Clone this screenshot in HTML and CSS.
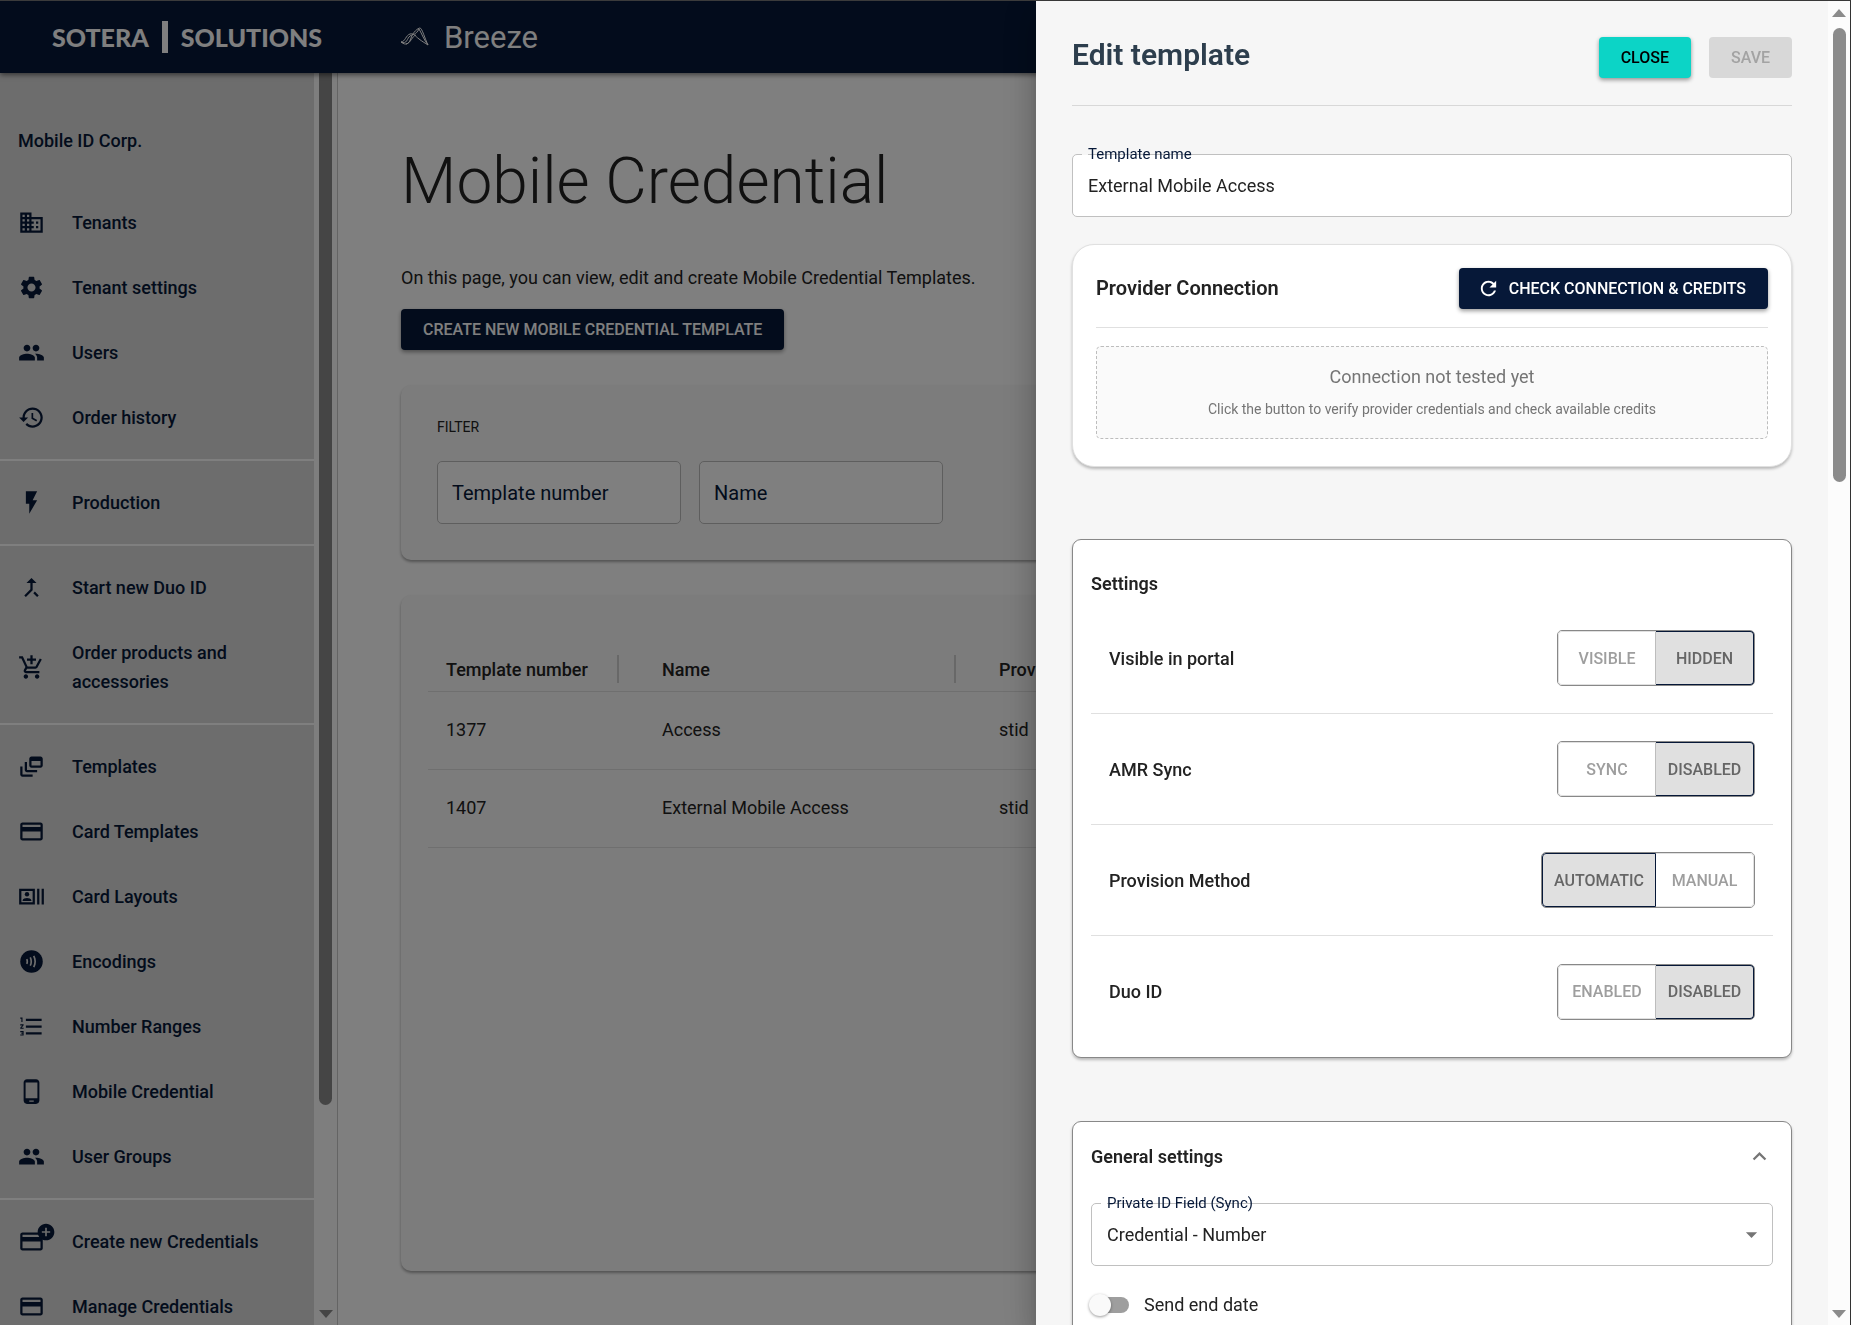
FILE: index.html
```html
<!DOCTYPE html>
<html lang="en">
<head>
    <meta charset="UTF-8">
    <meta name="viewport" content="width=device-width, initial-scale=1.0">
    <title>Breeze - Mobile Credential</title>
    <link rel="stylesheet" href="styles.css">
</head>
<body>
    <!-- Shared icons -->
    <svg class="sprite" aria-hidden="true">
        <symbol id="icon-people" viewBox="0 0 24 24"><path d="M16 11c1.660 0 2.990-1.340 2.990-3S17.660 5 16 5s-3 1.340-3 3 1.340 3 3 3zm-8 0c1.660 0 2.990-1.340 2.990-3S9.660 5 8 5 5 6.340 5 8s1.340 3 3 3zm0 2c-2.330 0-7 1.170-7 3.500V19h14v-2.500c0-2.330-4.670-3.500-7-3.500zm8 0c-.29 0-.62.02-.97.05 1.160.84 1.970 1.970 1.970 3.450V19h6v-2.500c0-2.330-4.670-3.500-7-3.500z"/></symbol>
        <symbol id="icon-card" viewBox="0 0 24 24"><path d="M20 4H4c-1.110 0-1.990.89-1.990 2L2 18c0 1.110.89 2 2 2h16c1.110 0 2-.89 2-2V6c0-1.110-.89-2-2-2zm0 14H4v-6h16v6zm0-10H4V6h16v2z"/></symbol>
    </svg>

    <header class="topbar">
        <div class="brand">SOTERA <span class="brand-bar"></span> SOLUTIONS</div>
        <div class="product">
            <svg class="product-icon" viewBox="0 0 28 20"><path d="M0 15C4 15 5 8 9 7c4-1 5 2 9 5s6 4 9 6M0 15c5 4 8 2 10-4S17 1 19 1s5 11 8 17M0 15c6 3 6-4 9-6s6-1 9-7c3 5 5 11 9 16M5 17c5-1 6-8 10-9"/></svg>
            <span>Breeze</span>
        </div>
    </header>

    <div class="layout">
        <aside class="sidebar">
            <nav class="menu">
                <p class="tenant">Mobile ID Corp.</p>
                <div class="menu-group">
                    <a class="menu-item" href="#"><svg class="icon" viewBox="0 0 24 24"><path d="M12 7V3H2v18h20V7H12zM6 19H4v-2h2v2zm0-4H4v-2h2v2zm0-4H4V9h2v2zm0-4H4V5h2v2zm4 12H8v-2h2v2zm0-4H8v-2h2v2zm0-4H8V9h2v2zm0-4H8V5h2v2zm10 12h-8v-2h2v-2h-2v-2h2v-2h-2V9h8v10zm-2-8h-2v2h2v-2zm0 4h-2v2h2v-2z"/></svg><span>Tenants</span></a>
                    <a class="menu-item" href="#"><svg class="icon" viewBox="0 0 24 24"><path d="M19.140 12.940c.04-.3.06-.61.06-.94 0-.32-.02-.64-.07-.94l2.030-1.580c.18-.14.23-.41.12-.61l-1.920-3.320c-.12-.22-.37-.29-.59-.22l-2.390.96c-.5-.38-1.030-.7-1.620-.94l-.36-2.540c-.04-.24-.24-.41-.48-.41h-3.840c-.24 0-.43.17-.47.41l-.36 2.540c-.59.24-1.130.57-1.620.94l-2.390-.96c-.22-.08-.47 0-.59.22L2.740 8.870c-.12.21-.08.47.12.61l2.030 1.580c-.05.3-.09.63-.09.94s.02.64.07.94l-2.030 1.580c-.18.14-.23.41-.12.61l1.920 3.320c.12.22.37.29.59.22l2.390-.96c.5.38 1.030.7 1.620.94l.36 2.540c.05.24.24.41.48.41h3.840c.24 0 .44-.17.47-.41l.36-2.540c.59-.24 1.130-.56 1.620-.94l2.390.96c.22.08.47 0 .59-.22l1.920-3.320c.12-.22.07-.47-.12-.61l-2.010-1.580zM12 15.600c-1.980 0-3.600-1.620-3.600-3.600s1.620-3.600 3.600-3.600 3.600 1.620 3.600 3.600-1.620 3.600-3.600 3.600z"/></svg><span>Tenant settings</span></a>
                    <a class="menu-item" href="#"><svg class="icon"><use href="#icon-people"/></svg><span>Users</span></a>
                    <a class="menu-item" href="#"><svg class="icon" viewBox="0 0 24 24"><path d="M13 3c-4.970 0-9 4.030-9 9H1l3.890 3.890.07.14L9 12H6c0-3.870 3.130-7 7-7s7 3.130 7 7-3.130 7-7 7c-1.930 0-3.680-.79-4.940-2.060l-1.420 1.420C8.270 19.990 10.510 21 13 21c4.970 0 9-4.030 9-9s-4.030-9-9-9zm-1 5v5l4.280 2.540.72-1.210-3.500-2.080V8H12z"/></svg><span>Order history</span></a>
                </div>
                <div class="menu-group">
                    <a class="menu-item" href="#"><svg class="icon" viewBox="0 0 24 24"><path d="M7 2v11h3v9l7-12h-4l4-8z"/></svg><span>Production</span></a>
                </div>
                <div class="menu-group">
                    <a class="menu-item" href="#"><svg class="icon" viewBox="0 0 24 24"><path d="M17 20.410 18.410 19 15 15.590 13.590 17 17 20.410zM7.500 8H11v5.590L5.590 19 7 20.410l6-6V8h3.500L12 3.500 7.500 8z"/></svg><span>Start new Duo ID</span></a>
                    <a class="menu-item" href="#"><svg class="icon" viewBox="0 0 24 24"><path d="M11 9h2V6h3V4h-3V1h-2v3H8v2h3v3zm-4 9c-1.100 0-1.990.9-1.990 2S5.900 22 7 22s2-.9 2-2-.9-2-2-2zm10 0c-1.100 0-1.990.9-1.990 2s.89 2 1.990 2 2-.9 2-2-.9-2-2-2zm-8.900-5h7.450c.75 0 1.410-.41 1.750-1.030L21.160 4.960 19.420 4l-3.870 7H8.530L4.270 2H1v2h2l3.600 7.590-1.350 2.440C4.520 15.370 5.480 17 7 17h12v-2H7l1.100-2z"/></svg><span>Order products and accessories</span></a>
                </div>
                <div class="menu-group">
                    <a class="menu-item" href="#"><svg class="icon" viewBox="0 0 24 24"><path d="M8 8H6v7c0 1.100.9 2 2 2h9v-2H8V8z"/><path d="M20 3h-8c-1.100 0-2 .9-2 2v6c0 1.100.9 2 2 2h8c1.100 0 2-.9 2-2V5c0-1.100-.9-2-2-2zm0 8h-8V7h8v4z"/><path d="M4 12H2v7c0 1.100.9 2 2 2h9v-2H4v-7z"/></svg><span>Templates</span></a>
                    <a class="menu-item" href="#"><svg class="icon"><use href="#icon-card"/></svg><span>Card Templates</span></a>
                    <a class="menu-item" href="#"><svg class="icon" viewBox="0 0 24 24"><path d="M21 5v14h2V5h-2zm-4 14h2V5h-2v14zM15 5H1v14h14V5zm-2 12H3V7h10v10z"/><circle cx="8" cy="9.940" r="1.950"/><path d="M11.890 15.350c0-1.300-2.590-1.950-3.890-1.950s-3.890.65-3.890 1.950V16h7.780v-.65z"/></svg><span>Card Layouts</span></a>
                    <a class="menu-item" href="#"><svg class="icon" viewBox="0 0 24 24"><circle cx="12" cy="12" r="10"/><path class="icon-cut" d="M8.460 14.450 7.100 13.830c.28-.61.41-1.240.4-1.860-.01-.63-.14-1.240-.4-1.800l1.360-.63c.35.75.53 1.560.54 2.400.01.86-.17 1.700-.54 2.510zm3.070 1.560-1.300-.74c.52-.92.78-1.980.78-3.150 0-1.190-.27-2.330-.8-3.400l1.340-.67c.64 1.280.96 2.650.96 4.070 0 1.430-.33 2.740-.98 3.890zm3.140 1.320-1.350-.66c.78-1.600 1.180-3.180 1.180-4.690 0-1.510-.4-3.070-1.180-4.640l1.340-.67C15.560 8.450 16 10.230 16 11.980c0 1.720-.44 3.510-1.330 5.350z"/></svg><span>Encodings</span></a>
                    <a class="menu-item" href="#"><svg class="icon" viewBox="0 0 24 24"><path d="M2 17h2v.5H3v1h1v.5H2v1h3v-4H2v1zm1-9h1V4H2v1h1v3zm-1 3h1.800L2 13.100v.9h3v-1H3.200L5 10.900V10H2v1zm5-6v2h14V5H7zm0 14h14v-2H7v2zm0-6h14v-2H7v2z"/></svg><span>Number Ranges</span></a>
                    <a class="menu-item" href="#"><svg class="icon" viewBox="0 0 24 24"><path d="M16 1H8C6.340 1 5 2.340 5 4v16c0 1.660 1.340 3 3 3h8c1.660 0 3-1.340 3-3V4c0-1.660-1.340-3-3-3zm-2 20h-4v-1h4v1zm3.250-3H6.750V4h10.500v14z"/></svg><span>Mobile Credential</span></a>
                    <a class="menu-item" href="#"><svg class="icon"><use href="#icon-people"/></svg><span>User Groups</span></a>
                </div>
                <div class="menu-group">
                    <a class="menu-item" href="#">
                        <span class="icon-wrap">
                            <svg class="icon"><use href="#icon-card"/></svg>
                            <svg class="icon-badge" viewBox="0 0 24 24"><path d="M12 2C6.480 2 2 6.480 2 12s4.480 10 10 10 10-4.480 10-10S17.520 2 12 2zm5 11h-4v4h-2v-4H7v-2h4V7h2v4h4v2z"/></svg>
                        </span>
                        <span>Create new Credentials</span>
                    </a>
                    <a class="menu-item" href="#"><svg class="icon"><use href="#icon-card"/></svg><span>Manage Credentials</span></a>
                </div>
            </nav>
            <div class="scrollbar sidebar-scrollbar">
                <div class="scroll-thumb"></div>
                <div class="scroll-arrow-down"></div>
            </div>
        </aside>

        <main class="content">
            <h1>Mobile Credential</h1>
            <p class="intro">On this page, you can view, edit and create Mobile Credential Templates.</p>
            <button class="btn btn-primary">Create new Mobile Credential Template</button>

            <section class="panel filter">
                <h2>Filter</h2>
                <div class="filter-fields">
                    <input type="text" placeholder="Template number" aria-label="Template number">
                    <input type="text" placeholder="Name" aria-label="Name">
                </div>
            </section>

            <section class="panel templates">
                <table>
                    <thead>
                        <tr>
                            <th class="col-number"><span>Template number</span></th>
                            <th class="col-name"><span>Name</span></th>
                            <th><span>Provider</span></th>
                        </tr>
                    </thead>
                    <tbody>
                        <tr><td>1377</td><td>Access</td><td>stid</td></tr>
                        <tr><td>1407</td><td>External Mobile Access</td><td>stid</td></tr>
                    </tbody>
                </table>
            </section>
        </main>
    </div>

    <div class="backdrop"></div>

    <div class="drawer" role="dialog" aria-labelledby="drawer-title">
        <div class="drawer-body">
            <div class="drawer-header">
                <h2 id="drawer-title">Edit template</h2>
                <div class="drawer-actions">
                    <button class="btn btn-accent">Close</button>
                    <button class="btn" disabled>Save</button>
                </div>
            </div>

            <div class="field">
                <label for="template-name">Template name</label>
                <input id="template-name" type="text" value="External Mobile Access">
            </div>

            <section class="card provider">
                <div class="provider-header">
                    <h3>Provider Connection</h3>
                    <button class="btn btn-primary">
                        <svg class="btn-icon" viewBox="0 0 24 24"><path d="M17.650 6.350C16.200 4.900 14.210 4 12 4c-4.420 0-7.990 3.580-7.990 8s3.570 8 7.990 8c3.730 0 6.840-2.550 7.730-6h-2.080c-.82 2.330-3.040 4-5.650 4-3.310 0-6-2.690-6-6s2.690-6 6-6c1.660 0 3.140.69 4.220 1.780L13 11h7V4l-2.350 2.350z"/></svg>
                        Check connection &amp; credits
                    </button>
                </div>
                <div class="connection-status">
                    <p>Connection not tested yet</p>
                    <small>Click the button to verify provider credentials and check available credits</small>
                </div>
            </section>

            <section class="card settings">
                <h3>Settings</h3>
                <div class="setting">
                    <span>Visible in portal</span>
                    <div class="toggle"><button>Visible</button><button class="selected" aria-pressed="true">Hidden</button></div>
                </div>
                <div class="setting">
                    <span>AMR Sync</span>
                    <div class="toggle"><button>Sync</button><button class="selected" aria-pressed="true">Disabled</button></div>
                </div>
                <div class="setting">
                    <span>Provision Method</span>
                    <div class="toggle"><button class="selected" aria-pressed="true">Automatic</button><button>Manual</button></div>
                </div>
                <div class="setting">
                    <span>Duo ID</span>
                    <div class="toggle"><button>Enabled</button><button class="selected" aria-pressed="true">Disabled</button></div>
                </div>
            </section>

            <section class="card general">
                <button class="general-header">
                    <span>General settings</span>
                    <svg class="icon" viewBox="0 0 24 24"><path d="M12 8l-6 6 1.410 1.410L12 10.830l4.590 4.580L18 14z"/></svg>
                </button>
                <div class="field">
                    <label for="private-id">Private ID Field (Sync)</label>
                    <select id="private-id"><option>Credential - Number</option></select>
                    <svg class="icon select-arrow" viewBox="0 0 24 24"><path d="M7 10l5 5 5-5z"/></svg>
                </div>
                <label class="switch"><input type="checkbox" role="switch">Send end date</label>
            </section>
        </div>
        <div class="scrollbar drawer-scrollbar">
            <div class="scroll-arrow-up"></div>
            <div class="scroll-thumb"></div>
            <div class="scroll-arrow-down"></div>
        </div>
    </div>
</body>
</html>
```
FILE: styles.css
```css
* {
    box-sizing: border-box;
}

body {
    margin: 0;
    height: 100vh;
    overflow: hidden;
    display: flex;
    flex-direction: column;
    border-top: 1px solid #777;
    background-color: #fff;
    font-family: Roboto, "Liberation Sans", sans-serif;
    font-size: 18px;
    line-height: 29px;
    color: #222;
}

h1, h2, h3, p {
    margin: 0;
}

button, input, select {
    font: inherit;
    color: inherit;
}

button {
    cursor: pointer;
}

.sprite {
    display: none;
}

.icon {
    width: 27px;
    height: 27px;
    flex-shrink: 0;
    fill: currentColor;
}

/* Top bar */
.topbar {
    position: relative;
    display: flex;
    align-items: center;
    flex-shrink: 0;
    height: 72px;
    padding-left: 52px;
    background-color: #061838;
    color: #fff;
    box-shadow: 0 2px 5px rgba(0, 0, 0, 0.5);
}

.brand {
    display: flex;
    align-items: center;
    gap: 13px;
    width: 349px;
    font-family: Lato, sans-serif;
    font-size: 25px;
    font-weight: 900;
}

.brand-bar {
    width: 6px;
    height: 32px;
    background-color: #fff;
}

.product {
    display: flex;
    align-items: center;
    gap: 15px;
    font-size: 31px;
}

.product-icon {
    width: 28px;
    height: 20px;
    fill: none;
    stroke: #fff;
    stroke-width: 1;
}

.layout {
    display: flex;
    flex: 1;
    min-height: 0;
}

/* Sidebar */
.sidebar {
    display: flex;
    flex-shrink: 0;
    width: 338px;
    border-right: 1px solid #c8c8c8;
    overflow: hidden;
}

.menu {
    flex: 1;
    background-color: #dadada;
    color: #061838;
    font-weight: 500;
}

.tenant {
    padding: 53px 18px 26px;
}

.menu-group {
    padding: 9px 0;
    border-bottom: 2px solid #fff;
}

.menu-item {
    display: flex;
    align-items: center;
    gap: 27px;
    padding: 18px;
    color: inherit;
    text-decoration: none;
}

.icon-cut {
    fill: #dadada;
}

.icon-wrap {
    position: relative;
    display: flex;
}

.icon-badge {
    position: absolute;
    top: -6px;
    right: -11px;
    width: 20px;
    height: 20px;
    fill: currentColor;
}

/* Scrollbars */
.scrollbar {
    display: flex;
    flex-direction: column;
    align-items: center;
    flex-shrink: 0;
    background-color: #fcfcfc;
}

.sidebar-scrollbar {
    width: 23px;
    justify-content: space-between;
    padding-bottom: 7px;
}

.scroll-thumb {
    width: 13px;
    border-radius: 7px;
    background-color: #8b8b8b;
}

.sidebar-scrollbar .scroll-thumb {
    height: 1032px;
    border-radius: 0 0 7px 7px;
}

.scroll-arrow-up,
.scroll-arrow-down {
    border: 7px solid transparent;
    border-width: 0 7px;
}

.scroll-arrow-up {
    border-bottom: 8px solid #8b8b8b;
}

.scroll-arrow-down {
    border-top: 8px solid #8b8b8b;
}

/* Main content */
.content {
    flex: 1;
    padding: 73px 63px 54px;
    display: flex;
    flex-direction: column;
    align-items: flex-start;
}

h1 {
    font-size: 64px;
    font-weight: 300;
    line-height: 72px;
}

.intro {
    margin: 45px 0 17px;
}

.btn {
    display: flex;
    align-items: center;
    gap: 9px;
    height: 41px;
    padding: 0 22px;
    border: none;
    border-radius: 4px;
    font-size: 16px;
    font-weight: 500;
    text-transform: uppercase;
}

.btn-primary {
    background-color: #061838;
    color: #fff;
    box-shadow: 0 2px 4px rgba(0, 0, 0, 0.4);
}

.btn-accent {
    background-color: #0cd4c6;
    color: #000;
    box-shadow: 0 2px 4px rgba(0, 0, 0, 0.4);
}

.btn:disabled {
    background-color: #d8d8d8;
    color: #a3a3a3;
}

.btn-icon {
    width: 23px;
    height: 23px;
    margin-left: -4px;
    fill: currentColor;
}

.panel {
    width: 100%;
    margin-top: 35px;
    border-radius: 10px;
    background-color: #f8f8f8;
    box-shadow: 0 2px 3px rgba(0, 0, 0, 0.35);
}

.filter {
    padding: 28px 36px 36px;
}

.filter h2 {
    font-size: 14px;
    font-weight: 400;
    line-height: 29px;
    text-transform: uppercase;
}

.filter-fields {
    display: flex;
    gap: 18px;
    margin-top: 19px;
}

.filter-fields input {
    width: 244px;
    height: 63px;
    padding: 0 14px;
    border: 1px solid #bdbdbd;
    border-radius: 5px;
    background-color: #fff;
    font-size: 20px;
}

.filter-fields input::placeholder {
    color: #061838;
    opacity: 1;
}

.templates {
    flex: 1;
    padding: 52px 27px;
}

.templates table {
    width: 100%;
    border-collapse: collapse;
    table-layout: fixed;
    text-align: left;
}

.templates th,
.templates td {
    padding: 0 18px;
    border-bottom: 1px solid #dedede;
}

.templates th {
    height: 44px;
    padding-right: 0;
    font-weight: 500;
}

.templates th span {
    display: block;
    height: 28px;
}

.templates .col-number {
    width: 216px;
}

.templates .col-name {
    width: 337px;
}

.templates .col-number span,
.templates .col-name span {
    margin-right: 25px;
    border-right: 2px solid #d0d0d0;
}

.templates td {
    height: 78px;
    padding-bottom: 2px;
}

.backdrop {
    position: fixed;
    inset: 0;
    background-color: rgba(0, 0, 0, 0.5);
}

/* Edit drawer */
.drawer {
    position: fixed;
    top: 1px;
    right: 0;
    bottom: 0;
    display: flex;
    width: 815px;
    max-width: 100%;
    border-right: 1px solid #333;
    background-color: #f6f6f6;
    box-shadow: 0 9px 12px -5px rgba(0, 0, 0, 0.2), 0 18px 27px 2px rgba(0, 0, 0, 0.14), 0 7px 34px 6px rgba(0, 0, 0, 0.12);
}

.drawer-body {
    flex: 1;
    padding: 36px;
    overflow: hidden;
}

.drawer-scrollbar {
    width: 22px;
    padding: 8px 0 7px;
}

.drawer-scrollbar .scroll-thumb {
    height: 454px;
    margin: 11px 0 auto;
}

.drawer-header {
    display: flex;
    justify-content: space-between;
    align-items: flex-start;
    padding-bottom: 27px;
    border-bottom: 1px solid #d8d8d8;
}

.drawer-header h2 {
    font-size: 30px;
    font-weight: 600;
    line-height: 36px;
    color: #2d3e4d;
}

.drawer-actions {
    display: flex;
    gap: 18px;
}

.field {
    position: relative;
    margin-top: 48px;
}

.field label {
    position: absolute;
    top: -14px;
    left: 10px;
    padding-left: 6px;
    font-size: 15px;
    color: #061838;
    background: linear-gradient(#f6f6f6, #f6f6f6) 0 14px / 6px 1px no-repeat;
}

.field input,
.field select {
    width: 100%;
    height: 63px;
    padding: 0 15px;
    border: 1px solid #c0c0c0;
    border-radius: 5px;
    background-color: #fff;
    appearance: none;
}

.select-arrow {
    position: absolute;
    top: 18px;
    right: 8px;
    color: #757575;
    pointer-events: none;
}

.card {
    border: 1px solid #888;
    border-radius: 9px;
    background-color: #fff;
    box-shadow: 0 2px 3px rgba(0, 0, 0, 0.25);
}

.card h3 {
    font-size: 18px;
    font-weight: 600;
}

.provider {
    margin-top: 27px;
    padding: 23px 23px 27px;
    border-color: #e0e0e0;
    border-radius: 22px;
}

.provider h3 {
    font-size: 20px;
}

.provider-header {
    display: flex;
    justify-content: space-between;
    align-items: center;
    padding-bottom: 18px;
    border-bottom: 1px solid #e0e0e0;
}

.connection-status {
    margin-top: 18px;
    padding: 15px 15px 14px;
    border: 1px dashed #bdbdbd;
    border-radius: 5px;
    background-color: #fafafa;
    text-align: center;
    color: #757575;
}

.connection-status small {
    display: block;
    margin-top: 4px;
    font-size: 14px;
}

.settings {
    margin-top: 72px;
    padding: 29px 18px 10px;
}

.settings h3 {
    margin-bottom: 5px;
}

.setting {
    display: flex;
    justify-content: space-between;
    align-items: center;
    height: 111px;
    padding: 0 18px;
    border-bottom: 1px solid #e0e0e0;
    font-weight: 500;
}

.setting:last-child {
    border-bottom: none;
}

.toggle {
    display: flex;
    border: 1px solid #888;
    border-radius: 5px;
}

.toggle button {
    min-width: 98px;
    height: 54px;
    padding: 0 11px;
    border: 1px solid #e0e0e0;
    background-color: #fff;
    font-size: 16px;
    font-weight: 500;
    text-transform: uppercase;
    color: #9e9e9e;
}

.toggle button:first-child {
    border-right-color: #bdbdbd;
    border-radius: 4px 0 0 4px;
}

.toggle button:last-child {
    border-left: none;
    border-radius: 0 4px 4px 0;
}

.toggle button.selected {
    border-color: #061838;
    background-color: #e0e0e0;
    color: #666;
}

.general {
    margin-top: 63px;
    padding: 20px 18px 36px;
}

.general-header {
    display: flex;
    justify-content: space-between;
    align-items: center;
    width: 100%;
    padding: 0;
    border: none;
    background: none;
    font-weight: 600;
}

.general-header .icon {
    color: #757575;
}

.general .field {
    margin-top: 32px;
}

.general .field label {
    background-image: linear-gradient(#fff, #fff);
}

.switch {
    display: flex;
    align-items: center;
    gap: 15px;
    margin-top: 24px;
}

.switch input {
    display: flex;
    align-items: center;
    width: 38px;
    height: 16px;
    margin: 0;
    border-radius: 8px;
    background-color: #9e9e9e;
    appearance: none;
}

.switch input::before {
    content: "";
    width: 22px;
    height: 22px;
    margin-left: -2px;
    flex-shrink: 0;
    border-radius: 50%;
    background-color: #fafafa;
    box-shadow: 0 1px 3px rgba(0, 0, 0, 0.4);
}
```
